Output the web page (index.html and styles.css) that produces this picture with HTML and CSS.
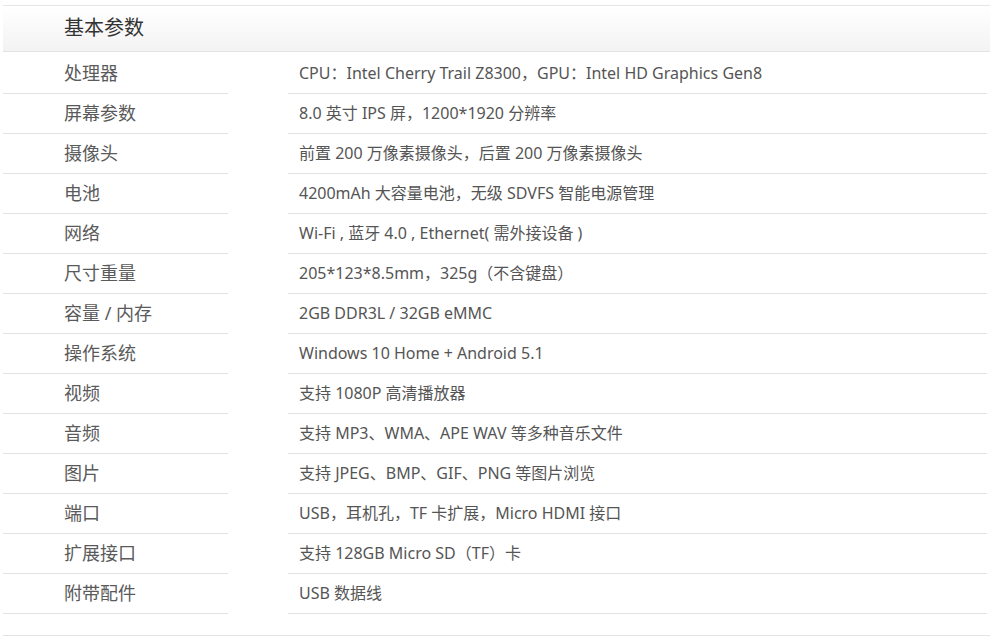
FILE: index.html
```html
<!DOCTYPE html>
<html lang="zh-CN">
<head>
<meta charset="utf-8">
<title>基本参数</title>
<link rel="stylesheet" href="styles.css">
</head>
<body>
<div class="page">
  <div class="spec">
    <div class="spec-head">基本参数</div>
    <div class="spec-rows">
      <div class="label">处理器</div><div class="value">CPU：Intel Cherry Trail Z8300，GPU：Intel HD Graphics Gen8</div>
      <div class="label">屏幕参数</div><div class="value">8.0 英寸 IPS 屏，1200*1920 分辨率</div>
      <div class="label">摄像头</div><div class="value">前置 200 万像素摄像头，后置 200 万像素摄像头</div>
      <div class="label">电池</div><div class="value">4200mAh 大容量电池，无级 SDVFS 智能电源管理</div>
      <div class="label">网络</div><div class="value">Wi-Fi , 蓝牙 4.0 , Ethernet( 需外接设备 )</div>
      <div class="label">尺寸重量</div><div class="value">205*123*8.5mm，325g（不含键盘）</div>
      <div class="label">容量 / 内存</div><div class="value">2GB DDR3L / 32GB eMMC</div>
      <div class="label">操作系统</div><div class="value">Windows 10 Home + Android 5.1</div>
      <div class="label">视频</div><div class="value">支持 1080P 高清播放器</div>
      <div class="label">音频</div><div class="value">支持 MP3、WMA、APE WAV 等多种音乐文件</div>
      <div class="label">图片</div><div class="value">支持 JPEG、BMP、GIF、PNG 等图片浏览</div>
      <div class="label">端口</div><div class="value">USB，耳机孔，TF 卡扩展，Micro HDMI 接口</div>
      <div class="label">扩展接口</div><div class="value">支持 128GB Micro SD（TF）卡</div>
      <div class="label">附带配件</div><div class="value">USB 数据线</div>
    </div>
    <div class="spec-foot"></div>
  </div>
</div>
</body>
</html>
```
FILE: styles.css
```css
html, body {
  margin: 0;
  padding: 0;
  background: #fff;
}
body {
  font-family: "Noto Sans", "Noto Sans CJK SC", sans-serif;
  color: #555;
}
.page {
  padding: 5px 0 0 3px;
}
.spec {
  width: 987px;
}
.spec-head {
  height: 45px;
  border-top: 1px solid #e6e6e6;
  border-bottom: 1px solid #e3e3e3;
  background: linear-gradient(to bottom, #ffffff, #f3f3f3);
  padding-left: 61px;
  font-size: 20px;
  line-height: 43px;
  color: #333;
}
.spec-rows {
  display: grid;
  grid-template-columns: 225px 699px;
  column-gap: 60px;
  padding-top: 2px;
}
.label, .value {
  height: 39px;
  line-height: 39px;
  border-bottom: 1px solid #e3e3e3;
  white-space: nowrap;
}
.label {
  padding-left: 61px;
  font-size: 18px;
  color: #5a5a5a;
}
.value {
  padding-left: 11px;
  font-size: 16px;
}
.spec-foot {
  height: 21px;
  border-bottom: 1px solid #e3e3e3;
}
```
